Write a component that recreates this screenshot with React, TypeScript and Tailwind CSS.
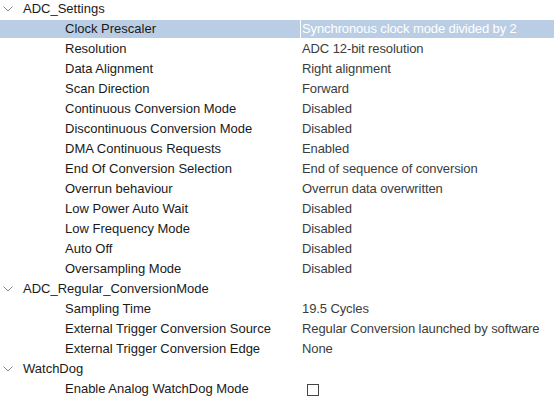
import React from "react";

type Item = { label: string; value?: string; checkbox?: boolean };
type Group = { name: string; items: Item[] };

const groups: Group[] = [
  {
    name: "ADC_Settings",
    items: [
      { label: "Clock Prescaler", value: "Synchronous clock mode divided by 2" },
      { label: "Resolution", value: "ADC 12-bit resolution" },
      { label: "Data Alignment", value: "Right alignment" },
      { label: "Scan Direction", value: "Forward" },
      { label: "Continuous Conversion Mode", value: "Disabled" },
      { label: "Discontinuous Conversion Mode", value: "Disabled" },
      { label: "DMA Continuous Requests", value: "Enabled" },
      { label: "End Of Conversion Selection", value: "End of sequence of conversion" },
      { label: "Overrun behaviour", value: "Overrun data overwritten" },
      { label: "Low Power Auto Wait", value: "Disabled" },
      { label: "Low Frequency Mode", value: "Disabled" },
      { label: "Auto Off", value: "Disabled" },
      { label: "Oversampling Mode", value: "Disabled" },
    ],
  },
  {
    name: "ADC_Regular_ConversionMode",
    items: [
      { label: "Sampling Time", value: "19.5 Cycles" },
      { label: "External Trigger Conversion Source", value: "Regular Conversion launched by software" },
      { label: "External Trigger Conversion Edge", value: "None" },
    ],
  },
  {
    name: "WatchDog",
    items: [{ label: "Enable Analog WatchDog Mode", checkbox: true }],
  },
];

function Chevron() {
  return (
    <svg width="10" height="6" viewBox="0 0 10 6" className="ml-[3px] mr-[10px]">
      <path d="M0.5 0.5 L5 5 L9.5 0.5" fill="none" stroke="#8a8a8a" strokeWidth="1" />
    </svg>
  );
}

export default function App() {
  return (
    <div
      className="w-[554px] h-[401px] bg-white overflow-hidden text-[13px] -mt-px"
      style={{ fontFamily: '"Liberation Sans", Arial, sans-serif' }}
    >
      {groups.map((g) => (
        <div key={g.name}>
          <div className="h-5 flex items-center text-[#1a1a1a]">
            <Chevron />
            <span>{g.name}</span>
          </div>
          {g.items.map((it) => {
            const selected = it.label === "Clock Prescaler";
            return (
              <div
                key={it.label}
                className={"h-5 flex items-stretch " + (selected ? "pt-px" : "")}
              >
                <div
                  className={
                    "w-[300px] flex items-center pl-[65px] text-[#1a1a1a] " +
                    (selected ? "bg-[#b9cee5] mb-px" : "")
                  }
                >
                  {it.label}
                </div>
                <div
                  className={
                    "flex-1 flex items-center pl-px tracking-[-0.1px] " +
                    (selected ? "bg-[#b9cee5] ml-px mb-px text-white" : "ml-px text-[#3c3c3c]")
                  }
                >
                  {it.checkbox ? (
                    <span className="ml-[5px] mt-[2px] w-3 h-3 border border-[#444] bg-white inline-block" />
                  ) : (
                    it.value
                  )}
                </div>
              </div>
            );
          })}
        </div>
      ))}
    </div>
  );
}
